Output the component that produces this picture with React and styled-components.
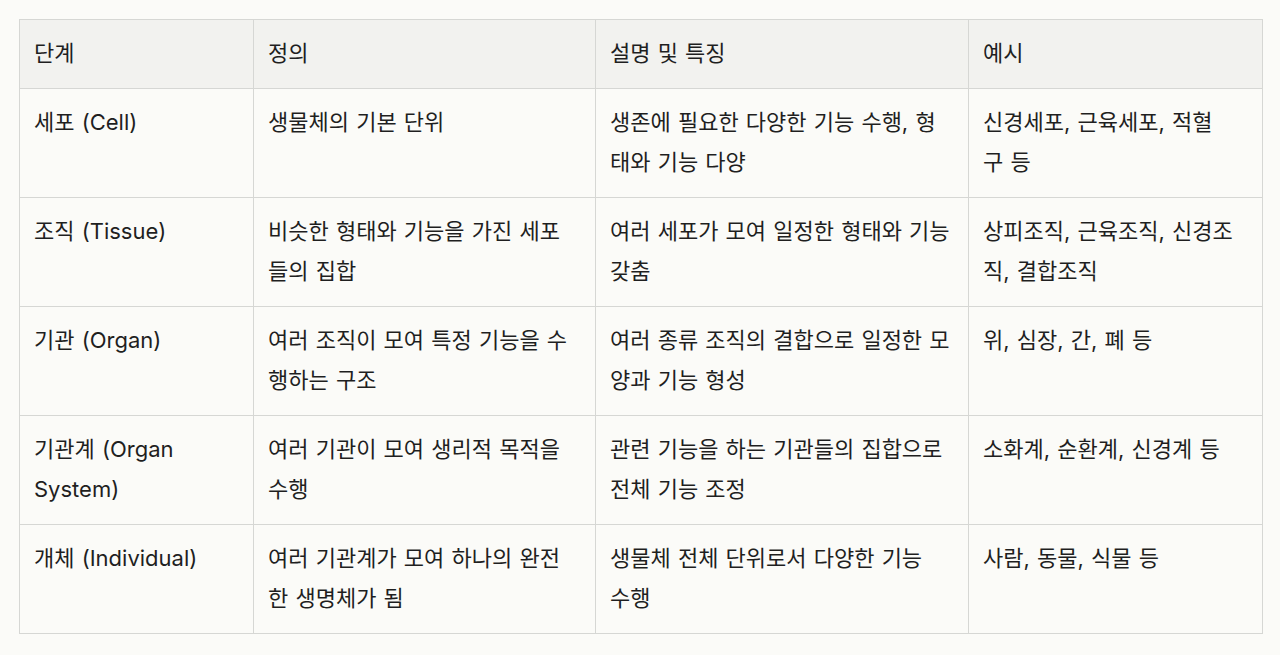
import React from "react";
import styled, { createGlobalStyle } from "styled-components";

const GlobalStyle = createGlobalStyle`
  html, body {
    margin: 0;
    padding: 0;
    background: #fbfbf8;
  }
  body {
    font-family: Inter, "Noto Sans CJK KR", sans-serif;
    color: #1f1f1f;
  }
`;

const Page = styled.div`
  padding: 19px 18px 20px 19px;
`;

const Table = styled.table`
  width: 1243px;
  border-collapse: collapse;
  table-layout: fixed;
  border: 1px solid #d6d7d4;
  font-size: 22px;
  line-height: 40px;
  word-spacing: 1px;
`;

const Col = styled.col`
  width: ${p => p.w}px;
`;

const HeadCell = styled.th`
  background: #f2f2ef;
  font-weight: 400;
  text-align: left;
  vertical-align: top;
  padding: 13px 14px 15px;
  border: 1px solid #d6d7d4;
`;

const Cell = styled.td`
  vertical-align: top;
  padding: 13px 14px 15px;
  border: 1px solid #d6d7d4;
`;

const Line = styled.span`
  display: block;
  white-space: nowrap;
`;

const rows = [
  [["세포 (Cell)"], ["생물체의 기본 단위"], ["생존에 필요한 다양한 기능 수행, 형", "태와 기능 다양"], ["신경세포, 근육세포, 적혈", "구 등"]],
  [["조직 (Tissue)"], ["비슷한 형태와 기능을 가진 세포", "들의 집합"], ["여러 세포가 모여 일정한 형태와 기능", "갖춤"], ["상피조직, 근육조직, 신경조", "직, 결합조직"]],
  [["기관 (Organ)"], ["여러 조직이 모여 특정 기능을 수", "행하는 구조"], ["여러 종류 조직의 결합으로 일정한 모", "양과 기능 형성"], ["위, 심장, 간, 폐 등"]],
  [["기관계 (Organ", "System)"], ["여러 기관이 모여 생리적 목적을", "수행"], ["관련 기능을 하는 기관들의 집합으로", "전체 기능 조정"], ["소화계, 순환계, 신경계 등"]],
  [["개체 (Individual)"], ["여러 기관계가 모여 하나의 완전", "한 생명체가 됨"], ["생물체 전체 단위로서 다양한 기능", "수행"], ["사람, 동물, 식물 등"]],
];

export default function App() {
  return (
    <>
      <GlobalStyle />
      <Page>
        <Table>
          <colgroup>
            <Col w={234} />
            <Col w={342} />
            <Col w={373} />
            <Col w={294} />
          </colgroup>
          <thead>
            <tr>
              <HeadCell>단계</HeadCell>
              <HeadCell>정의</HeadCell>
              <HeadCell>설명 및 특징</HeadCell>
              <HeadCell>예시</HeadCell>
            </tr>
          </thead>
          <tbody>
            {rows.map((r, i) => (
              <tr key={i}>
                {r.map((lines, j) => (
                  <Cell key={j}>
                    {lines.map((t, k) => (
                      <Line key={k}>{t}</Line>
                    ))}
                  </Cell>
                ))}
              </tr>
            ))}
          </tbody>
        </Table>
      </Page>
    </>
  );
}
